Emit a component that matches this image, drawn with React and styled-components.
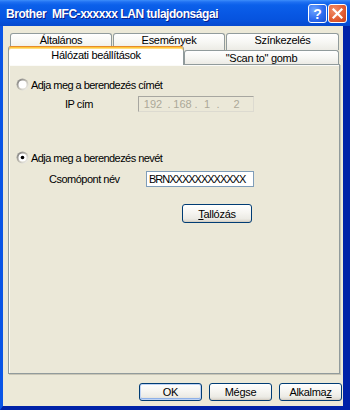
import React from 'react';
import styled, { createGlobalStyle } from 'styled-components';

const Global = createGlobalStyle`
  html, body { margin: 0; padding: 0; background: #ECE9D8; }
  body {
    width: 350px; height: 410px; overflow: hidden;
    font-family: "Liberation Sans", Arial, sans-serif;
  }
  * { box-sizing: border-box; }
`;

const Window = styled.div`
  width: 350px;
  height: 410px;
  display: flex;
  flex-direction: column;
  background: #ECE9D8;
`;

const TitleBar = styled.div`
  height: 26px;
  flex: none;
  display: flex;
  align-items: center;
  padding: 1px 3px 0 6px;
  background: linear-gradient(to bottom,
    #3D8EFA 0px, #1F70F2 2px, #0B60EA 5px, #0858E4 13px, #0653DE 20px, #0549CF 26px);
`;

const TitleText = styled.div`
  flex: 1;
  color: #fff;
  font-weight: bold;
  font-size: 12px;
  letter-spacing: -0.45px;
  white-space: pre;
  text-shadow: 1px 1px 0 #0A1E8C;
`;

const CaptionButton = styled.div`
  width: 19px;
  height: 19px;
  margin-left: 1px;
  border: 1px solid #fff;
  border-radius: 3px;
  display: flex;
  align-items: center;
  justify-content: center;
  color: #fff;
  font-weight: bold;
  font-size: 14px;
  background: ${p => p.$close
    ? 'radial-gradient(circle at 30% 30%, #F08E6A 0%, #E35E34 55%, #C7401B 100%)'
    : 'radial-gradient(circle at 30% 30%, #6FA5FF 0%, #2D6CF0 55%, #1B4FD0 100%)'};
`;

const Frame = styled.div`
  flex: 1;
  display: flex;
  flex-direction: column;
  border-left: 3px solid #0A55E6;
  border-right: 7px solid #0022A8;
  border-bottom: 4px solid #0022A8;
  padding: 7px 2px 5px 5px;
  background: #ECE9D8;
`;

const TabRows = styled.div`
  display: flex;
  flex-direction: column;
  position: relative;
  z-index: 2;
  margin-right: 1px;
`;

const TabRow = styled.div`
  display: flex;
  height: ${p => p.$h}px;
  padding-left: ${p => p.$pl}px;
  gap: ${p => p.$gap}px;
`;

const Tab = styled.div`
  width: ${p => p.$w}px;
  height: 100%;
  border: 1px solid #919B9C;
  border-bottom: none;
  border-radius: 3px 3px 0 0;
  background: linear-gradient(to bottom, #FFFFFF 0%, #F7F7F4 50%, #ECEBE5 100%);
  display: flex;
  align-items: center;
  justify-content: center;
  font-size: 11px;
  letter-spacing: -0.3px;
  color: #000;
  padding-bottom: ${p => p.$pb || 0}px;
`;

const ActiveTab = styled(Tab)`
  height: 19px;
  margin-top: -4px;
  background: #FFFFFF;
  border-top: 1px solid #E68B2C;
  box-shadow: inset 0 1px 0 #FFC83C, inset 0 2px 0 #FFDD80;
  padding-bottom: 2px;
  position: relative;
  z-index: 3;
`;

const Panel = styled.div`
  height: 310px;
  margin-right: 1px;
  border: 1px solid #919B9C;
  background: #EBE8D8;
  box-shadow: inset 1px 1px 0 #FBFBF8, 1px 1px 0 #C9C6B6;
  padding-left: 7px;
  display: flex;
  flex-direction: column;
  position: relative;
  z-index: 1;
`;

const RadioRow = styled.div`
  display: flex;
  align-items: center;
  height: 13px;
  margin-top: ${p => p.$mt}px;
  font-size: 11px;
  letter-spacing: -0.55px;
  color: #000;
`;

const RadioLabel = styled.span`
  margin-left: 2px;
`;

const FieldRow = styled.div`
  display: flex;
  align-items: center;
  height: 16px;
  margin-top: ${p => p.$mt}px;
  padding-left: ${p => p.$pl}px;
`;

const FieldLabel = styled.div`
  width: ${p => p.$w}px;
  font-size: 11px;
  letter-spacing: -0.5px;
  color: #000;
`;

const IpBox = styled.div`
  width: 116px;
  height: 16px;
  display: flex;
  align-items: center;
  border: 1px solid #A7A6A0;
  border-right-color: #DCDAD0;
  border-bottom-color: #DCDAD0;
  background: #EBE8D8;
  color: #ACA899;
  font-size: 11px;
`;

const Octet = styled.span`
  width: ${p => p.$w}px;
  text-align: center;
`;

const Dot = styled.span`
  width: 4px;
  text-align: center;
`;

const TextBox = styled.div`
  width: 108px;
  height: 16px;
  border: 1px solid #7F9DB9;
  background: #fff;
  font-size: 11px;
  letter-spacing: -1px;
  line-height: 14px;
  padding-left: 2px;
  color: #000;
  white-space: nowrap;
  overflow: hidden;
`;

const Button = styled.div`
  width: ${p => p.$w}px;
  height: ${p => p.$h}px;
  border: 1px solid #003C74;
  border-radius: 3px;
  background: linear-gradient(to bottom, #FFFFFF 0%, #F6F5F1 45%, #ECEBE5 80%, #D8D4CB 100%);
  box-shadow: ${p => p.$default
    ? 'inset 0 0 0 1px #BED3F5, inset 0 -1px 0 1px #8FB1E8'
    : 'inset 0 -1px 0 #D6D0C5'};
  display: flex;
  align-items: center;
  justify-content: center;
  font-size: 11px;
  letter-spacing: -0.3px;
  color: #000;
`;

const BrowseButton = styled(Button)`
  margin-top: 17px;
  margin-left: 166px;
`;

const ButtonRow = styled.div`
  display: flex;
  justify-content: flex-end;
  gap: 7px;
  margin-top: 9px;
  margin-right: -1px;
`;

function Radio({ checked }) {
  const o = checked ? 'ro1' : 'ro0';
  const i = checked ? 'ri1' : 'ri0';
  return (
    <svg width="13" height="13" viewBox="0 0 13 13">
      <defs>
        <linearGradient id={o} x1="0" y1="0" x2="1" y2="1">
          <stop offset="0" stopColor="#8A8A8A" />
          <stop offset="0.5" stopColor="#B8B6AC" />
          <stop offset="1" stopColor="#FFFFFF" />
        </linearGradient>
        <linearGradient id={i} x1="0" y1="0" x2="1" y2="1">
          <stop offset="0" stopColor="#5A5A5A" />
          <stop offset="0.55" stopColor="#D4D0C8" />
          <stop offset="1" stopColor="#ECE9D8" />
        </linearGradient>
      </defs>
      <circle cx="6.5" cy="6.5" r="6" fill={`url(#${o})`} />
      <circle cx="6.5" cy="6.5" r="5" fill={`url(#${i})`} />
      <circle cx="6.5" cy="6.5" r="4" fill="#FFFFFF" />
      {checked && <circle cx="6.5" cy="6.5" r="1.8" fill="#000" />}
    </svg>
  );
}

export default function App() {
  return (
    <>
      <Global />
      <Window>
        <TitleBar>
          <TitleText>{'Brother  MFC-xxxxxx LAN tulajdonságai'}</TitleText>
          <CaptionButton>?</CaptionButton>
          <CaptionButton $close>
            <svg width="11" height="11" viewBox="0 0 11 11">
              <path d="M1.5 1.5 L9.5 9.5 M9.5 1.5 L1.5 9.5" stroke="#fff" strokeWidth="2.2" strokeLinecap="square" />
            </svg>
          </CaptionButton>
        </TitleBar>
        <Frame>
          <TabRows>
            <TabRow $h={17} $pl={2} $gap={1}>
              <Tab $w={102} $pb={4}>Általános</Tab>
              <Tab $w={112} $pb={4}>Események</Tab>
              <Tab $w={113} $pb={4}>Színkezelés</Tab>
            </TabRow>
            <TabRow $h={14} $pl={0} $gap={0}>
              <ActiveTab $w={176}>Hálózati beállítások</ActiveTab>
              <Tab $w={155}>"Scan to" gomb</Tab>
            </TabRow>
          </TabRows>
          <Panel>
            <RadioRow $mt={13}>
              <Radio />
              <RadioLabel>Adja meg a berendezés címét</RadioLabel>
            </RadioRow>
            <FieldRow $mt={5} $pl={49}>
              <FieldLabel $w={73}>IP cím</FieldLabel>
              <IpBox>
                <Octet $w={28}>192</Octet>
                <Dot>.</Dot>
                <Octet $w={23}>168</Octet>
                <Dot>.</Dot>
                <Octet $w={18}>1</Octet>
                <Dot>.</Dot>
                <Octet $w={33}>2</Octet>
              </IpBox>
            </FieldRow>
            <RadioRow $mt={39}>
              <Radio checked />
              <RadioLabel>Adja meg a berendezés nevét</RadioLabel>
            </RadioRow>
            <FieldRow $mt={7} $pl={33}>
              <FieldLabel $w={97}>Csomópont név</FieldLabel>
              <TextBox>BRNXXXXXXXXXXXX</TextBox>
            </FieldRow>
            <BrowseButton $w={70} $h={19}><span><u>T</u>allózás</span></BrowseButton>
          </Panel>
          <ButtonRow>
            <Button $w={63} $h={18} $default>OK</Button>
            <Button $w={63} $h={18}>Mégse</Button>
            <Button $w={63} $h={18}><span>Alkalma<u>z</u></span></Button>
          </ButtonRow>
        </Frame>
      </Window>
    </>
  );
}
